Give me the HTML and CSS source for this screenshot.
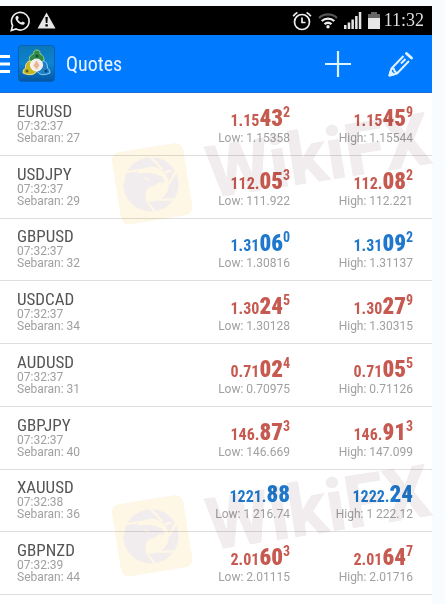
FILE: index.html
```html
<!DOCTYPE html>
<html lang="en">
<head>
  <meta charset="UTF-8" />
  <meta name="viewport" content="width=device-width, initial-scale=1.0" />
  <title>Quotes</title>
  <link rel="stylesheet" href="styles.css">
</head>
<body>
  <div class="phone">
    <div class="status-bar">
      <svg width="20" height="22" viewBox="0 0 20 22" fill="none" stroke="#eee" stroke-width="1.6">
        <path d="M1.3 20.5l1.3-5A8.8 8.8 0 1 1 6 18.9z"/>
        <path d="M6.2 6.2c.8-.9 1.6-.7 2 .3l.6 1.5-1 1.3c.9 1.7 1.9 2.6 3.5 3.3l1.2-1.2 2 1c.8.5-.2 2-1.4 2.3-3 .6-8-4-7.6-7.2.1-.5.3-.9.7-1.3z" fill="#eee" stroke="none"/>
      </svg>
      <svg width="19" height="17" viewBox="0 0 19 17">
        <path d="M9.5.5l9 16H.5z" fill="#e6e6e6"/>
        <path d="M8.4 5h2.400l-.4 6H8.800zM8.400 12.200h2.400v2.300H8.400z" fill="#000"/>
      </svg>
      <div class="status-right">
        <svg width="20" height="20" viewBox="0 0 20 20" fill="none" stroke="#eee" stroke-width="1.7">
          <circle cx="10" cy="11" r="7.5"/>
          <path d="M10 6.5v5h3.5M1.2 5.2A10 10 0 0 1 5.400 1.500M18.800 5.200A10 10 0 0 0 14.600 1.500"/>
        </svg>
        <svg width="20" height="16" viewBox="0 0 20 16" fill="none" stroke-width="2.3">
          <path d="M1 5a13 13 0 0 1 18 0" stroke="#555"/>
          <path d="M3.700 8a9.500 9.500 0 0 1 12.600 0M6.500 11.200a5.500 5.500 0 0 1 7 0" stroke="#eee"/>
          <circle cx="10" cy="13.800" r="1.700" fill="#eee"/>
        </svg>
        <svg width="18" height="17" viewBox="0 0 18 17" fill="#e6e6e6">
          <path d="M0 13h2.500v4H0zM3.700 10.500h2.500V17H3.700zM7.400 7.500h2.500V17H7.400zM11.100 4h2.500v13h-2.500zM14.800 0h2.500v17h-2.500z"/>
        </svg>
        <svg width="12" height="17" viewBox="0 0 12 17">
          <path d="M3 0h6v2h3v5H0V2h3z" fill="#666"/>
          <path d="M0 6h12v11H0z" fill="#e6e6e6"/>
        </svg>
        <span class="clock">11:32</span>
      </div>
    </div>

    <header class="app-bar">
      <button class="icon-btn" aria-label="Menu">
        <svg width="10" height="18" viewBox="0 0 10 18" fill="#fff">
          <path d="M0 0h10v3H0zM0 7.500h10v3H0zM0 15h10v3H0z"/>
        </svg>
      </button>
      <svg class="app-logo" width="37" height="37" viewBox="0 0 37 37">
        <defs>
          <linearGradient id="tile" x1="0" y1="0" x2="0" y2="1">
            <stop offset="0" stop-color="#0a78b8"/>
            <stop offset="0.5" stop-color="#0f83cf"/>
            <stop offset="1" stop-color="#0556a3"/>
          </linearGradient>
        </defs>
        <rect x="0.5" y="0.5" width="36" height="36" rx="3" fill="url(#tile)" stroke="#0560b8"/>
        <path d="M12 18c-2-5 0-8 3.500-9 0-3 1.500-4 3.500-4s3.500 1.500 3 4c3.500 1 5 5 3 9" fill="#2f8a4c" stroke="#9bd27c"/>
        <path d="M5 28c0-3 1-4 2.500-5 0-5 2-7 6-7l6 9c-2 5-8 6-14.500 3z" fill="#c5b62a" stroke="#eee68a"/>
        <path d="M32 28c0-3-1-4-2.500-5 0-5-2-7-5-7l-6 9c2 5 7 6 13.500 3z" fill="#2080c5" stroke="#8cd0f5"/>
        <circle cx="19" cy="11" r="1.500" fill="#124f2a"/>
        <circle cx="9" cy="26" r="1.500" fill="#4d651e"/>
        <circle cx="28" cy="26" r="1.500" fill="#064580"/>
        <circle cx="18.500" cy="20" r="6" fill="#f3eee6" stroke="#fff"/>
        <path d="M18.500 15.500l3 5-3 4-3-4z" fill="#e8b49c"/>
      </svg>
      <h1 class="app-title">Quotes</h1>
      <button class="icon-btn" aria-label="Add symbol">
        <svg width="28" height="28" viewBox="0 0 28 28" stroke="#dff2ff" stroke-width="2.200">
          <path d="M1 14h26M14 1v26"/>
        </svg>
      </button>
      <button class="icon-btn" aria-label="Edit list">
        <svg width="26" height="26" viewBox="0 0 26 26" fill="none" stroke="#dff2ff" stroke-width="2" stroke-linejoin="round">
          <path d="M15.500 5L3.500 17.500L1.500 24.500L9 22.500L21 10M3.500 17.500l2.500.5.500 2 2.500 2.500M13 12.500l4.500-4.500"/>
          <path d="M18.500 2.500l5 4.500" stroke-width="3" stroke-linecap="round"/>
          <path d="M1.500 24.500l1-4 3 3z" fill="#dff2ff"/>
        </svg>
      </button>
    </header>

    <table class="quotes">
      <tbody>
        <tr>
          <th scope="row"><span class="symbol">EURUSD</span>07:32:37<br>Sebaran: 27</th>
          <td><span class="price down">1.15<b>43</b><sup>2</sup></span>Low: 1.15358</td>
          <td><span class="price down">1.15<b>45</b><sup>9</sup></span>High: 1.15544</td>
        </tr>
        <tr>
          <th scope="row"><span class="symbol">USDJPY</span>07:32:37<br>Sebaran: 29</th>
          <td><span class="price down">112.<b>05</b><sup>3</sup></span>Low: 111.922</td>
          <td><span class="price down">112.<b>08</b><sup>2</sup></span>High: 112.221</td>
        </tr>
        <tr>
          <th scope="row"><span class="symbol">GBPUSD</span>07:32:37<br>Sebaran: 32</th>
          <td><span class="price up">1.31<b>06</b><sup>0</sup></span>Low: 1.30816</td>
          <td><span class="price up">1.31<b>09</b><sup>2</sup></span>High: 1.31137</td>
        </tr>
        <tr>
          <th scope="row"><span class="symbol">USDCAD</span>07:32:37<br>Sebaran: 34</th>
          <td><span class="price down">1.30<b>24</b><sup>5</sup></span>Low: 1.30128</td>
          <td><span class="price down">1.30<b>27</b><sup>9</sup></span>High: 1.30315</td>
        </tr>
        <tr>
          <th scope="row"><span class="symbol">AUDUSD</span>07:32:37<br>Sebaran: 31</th>
          <td><span class="price down">0.71<b>02</b><sup>4</sup></span>Low: 0.70975</td>
          <td><span class="price down">0.71<b>05</b><sup>5</sup></span>High: 0.71126</td>
        </tr>
        <tr>
          <th scope="row"><span class="symbol">GBPJPY</span>07:32:37<br>Sebaran: 40</th>
          <td><span class="price down">146.<b>87</b><sup>3</sup></span>Low: 146.669</td>
          <td><span class="price down">146.<b>91</b><sup>3</sup></span>High: 147.099</td>
        </tr>
        <tr>
          <th scope="row"><span class="symbol">XAUUSD</span>07:32:38<br>Sebaran: 36</th>
          <td><span class="price up">1221.<b>88</b></span>Low: 1 216.74</td>
          <td><span class="price up">1222.<b>24</b></span>High: 1 222.12</td>
        </tr>
        <tr>
          <th scope="row"><span class="symbol">GBPNZD</span>07:32:39<br>Sebaran: 44</th>
          <td><span class="price down">2.01<b>60</b><sup>3</sup></span>Low: 2.01115</td>
          <td><span class="price down">2.01<b>64</b><sup>7</sup></span>High: 2.01716</td>
        </tr>
      </tbody>
    </table>
  </div>

  <!-- brand watermark, laid over the list twice -->
  <svg class="watermark watermark-top" width="338" height="130" viewBox="0 0 338 130" aria-hidden="true">
    <defs>
      <g id="brand">
        <g transform="translate(-2 38) scale(0.333)">
          <rect x="33" y="28" width="217" height="219" rx="24" transform="rotate(-9 141 137)" fill="#fbeabd"/>
          <circle cx="139" cy="139" r="67" fill="none" stroke="#dccfd2" stroke-width="29"/>
          <path d="M66 102L140 93M132 52L172 94M178 104L200 98M218 92L190 140M222 184L160 186M152 222L118 182" stroke="#fbeabd" stroke-width="7"/>
          <path d="M55 140L82 112C110 102 145 103 160 112C172 114 178 122 178 135C168 132 158 132 155 138C150 146 135 143 128 152C117 166 118 190 142 218C92 218 58 190 55 140z" fill="#dccfd2"/>
          <path d="M116 117l20 6-12 4z" fill="#fbeabd"/>
        </g>
        <text class="brand-text" transform="translate(104 98) rotate(-9)">WikiFX</text>
      </g>
    </defs>
    <use href="#brand"/>
  </svg>
  <svg class="watermark watermark-bottom" width="338" height="130" viewBox="0 0 338 130" aria-hidden="true">
    <use href="#brand"/>
  </svg>
</body>
</html>
```

FILE: styles.css
```css
* {
  box-sizing: border-box;
}
body {
  margin: 0;
  padding: 6px 13px 0 0;
  min-height: 100vh;
  display: flex;
  position: relative;
  background-color: #f9fcfe;
  font-family: Roboto, sans-serif;
  overflow-x: hidden;
}
.phone {
  flex: 1;
  display: flex;
  flex-direction: column;
  padding-bottom: 9px;
  background-color: #fff;
}
.status-bar {
  display: flex;
  align-items: center;
  gap: 7px;
  height: 29px;
  padding: 0 8px 0 10px;
  background-color: #000;
}
.status-right {
  display: flex;
  align-items: center;
  gap: 6px;
  margin-left: auto;
}
.clock {
  margin-left: -2px;
  color: #ddd;
  font-family: "Liberation Serif", serif;
  font-size: 18px;
}
.app-bar {
  display: flex;
  align-items: center;
  height: 58px;
  padding-right: 18px;
  background-color: #007bff;
  border-bottom: 1px solid #1a6fd0;
}
.icon-btn {
  display: flex;
  padding: 0;
  border: none;
  background: none;
  cursor: pointer;
}
.icon-btn + .icon-btn {
  margin-left: 36px;
}
.app-logo {
  margin-left: 8px;
}
.app-title {
  flex: 1;
  margin: 0 0 0 11px;
  color: #e9f6ff;
  font-family: "Roboto Condensed", Roboto, sans-serif;
  font-size: 20px;
  font-weight: 400;
}
.quotes {
  flex: 1;
  display: flex;
}
.quotes tbody {
  flex: 1;
  display: grid;
  grid-auto-rows: 1fr;
}
.quotes tr {
  display: grid;
  grid-template-columns: 1fr 110px 123px;
  align-items: end;
  padding: 7px 19px 11px 17px;
  border-bottom: 1px solid #dedede;
}
.quotes th,
.quotes td {
  padding: 0;
  color: #a0a0a0;
  font-size: 12px;
  font-weight: 400;
  line-height: 12px;
  text-align: right;
}
.quotes th {
  text-align: left;
}
.symbol,
.price {
  display: block;
  font-family: "Roboto Condensed", Roboto, sans-serif;
}
.symbol {
  color: #555;
  font-size: 17px;
  font-weight: 400;
  line-height: 18px;
}
.price {
  font-size: 16px;
  font-weight: 700;
  line-height: 22px;
}
.price b {
  font-size: 23px;
}
.price sup {
  font-size: 14px;
  line-height: 0;
  vertical-align: 9px;
}
.down {
  color: #c65a50;
}
.up {
  color: #1f78cc;
}
.watermark {
  position: absolute;
  left: 107px;
  opacity: 0.4;
  mix-blend-mode: multiply;
  pointer-events: none;
}
.watermark-top {
  top: 100px;
}
.watermark-bottom {
  top: 452px;
}
.brand-text {
  font-family: Roboto, sans-serif;
  font-size: 72px;
  font-weight: 700;
  fill: #dccfd2;
  stroke: #dccfd2;
  stroke-width: 1px;
  stroke-linejoin: round;
}
```
